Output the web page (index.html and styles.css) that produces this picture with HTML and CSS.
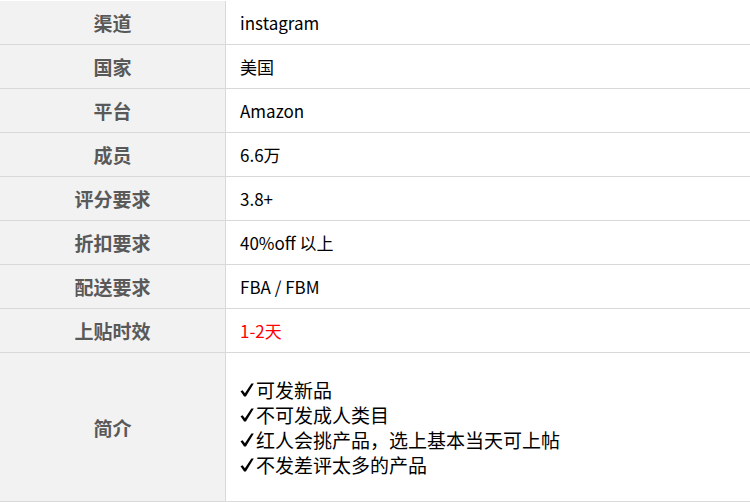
FILE: index.html
```html
<!DOCTYPE html>
<html lang="zh-CN">
<head>
    <meta charset="UTF-8">
    <meta name="viewport" content="width=device-width, initial-scale=1.0">
    <title>渠道信息</title>
    <link rel="stylesheet" href="styles.css">
</head>
<body>
    <table class="info-table">
        <tr>
            <th>渠道</th>
            <td>instagram</td>
        </tr>
        <tr>
            <th>国家</th>
            <td>美国</td>
        </tr>
        <tr>
            <th>平台</th>
            <td>Amazon</td>
        </tr>
        <tr>
            <th>成员</th>
            <td>6.6万</td>
        </tr>
        <tr>
            <th>评分要求</th>
            <td>3.8+</td>
        </tr>
        <tr>
            <th>折扣要求</th>
            <td>40%off 以上</td>
        </tr>
        <tr>
            <th>配送要求</th>
            <td>FBA / FBM</td>
        </tr>
        <tr>
            <th>上贴时效</th>
            <td class="red">1-2天</td>
        </tr>
        <tr class="intro-row">
            <th>简介</th>
            <td>
                <ul class="checks">
                    <li><svg class="tick" viewBox="0 0 14 14"><path d="M0.5 8.2 L2.6 7.2 L4.9 10.3 L11.4 0.5 L13.8 0.5 L5.9 13.5 L4.1 13.5 Z"/></svg>可发新品</li>
                    <li><svg class="tick" viewBox="0 0 14 14"><path d="M0.5 8.2 L2.6 7.2 L4.9 10.3 L11.4 0.5 L13.8 0.5 L5.9 13.5 L4.1 13.5 Z"/></svg>不可发成人类目</li>
                    <li><svg class="tick" viewBox="0 0 14 14"><path d="M0.5 8.2 L2.6 7.2 L4.9 10.3 L11.4 0.5 L13.8 0.5 L5.9 13.5 L4.1 13.5 Z"/></svg>红人会挑产品，选上基本当天可上帖</li>
                    <li><svg class="tick" viewBox="0 0 14 14"><path d="M0.5 8.2 L2.6 7.2 L4.9 10.3 L11.4 0.5 L13.8 0.5 L5.9 13.5 L4.1 13.5 Z"/></svg>不发差评太多的产品</li>
                </ul>
            </td>
        </tr>
    </table>
</body>
</html>
```

FILE: styles.css
```css
body {
    margin: 0;
    padding: 0;
    background-color: #ffffff;
    font-family: "Noto Sans CJK SC", "Noto Sans", sans-serif;
}
.info-table {
    width: 750px;
    margin-top: 1px;
    border-collapse: collapse;
}
.info-table th,
.info-table td {
    height: 43px;
    padding: 0;
    border-bottom: 1px solid #d9d9d9;
    vertical-align: middle;
}
.info-table th {
    width: 225px;
    background-color: #f2f2f2;
    border-right: 1px solid #d9d9d9;
    color: #595959;
    font-size: 19px;
    font-weight: bold;
    text-align: center;
}
.info-table td {
    padding-left: 14px;
    color: #000000;
    font-size: 17px;
    text-align: left;
}
.info-table td.red {
    color: #ff0000;
}
.intro-row th,
.intro-row td {
    height: 148px;
}
.checks {
    list-style-type: none;
    margin: 0;
    padding: 0;
    font-size: 19px;
    line-height: 25px;
}
.checks li {
    display: flex;
    align-items: center;
}
.tick {
    width: 14px;
    height: 14px;
    margin-right: 2px;
    fill: #000000;
}
```
